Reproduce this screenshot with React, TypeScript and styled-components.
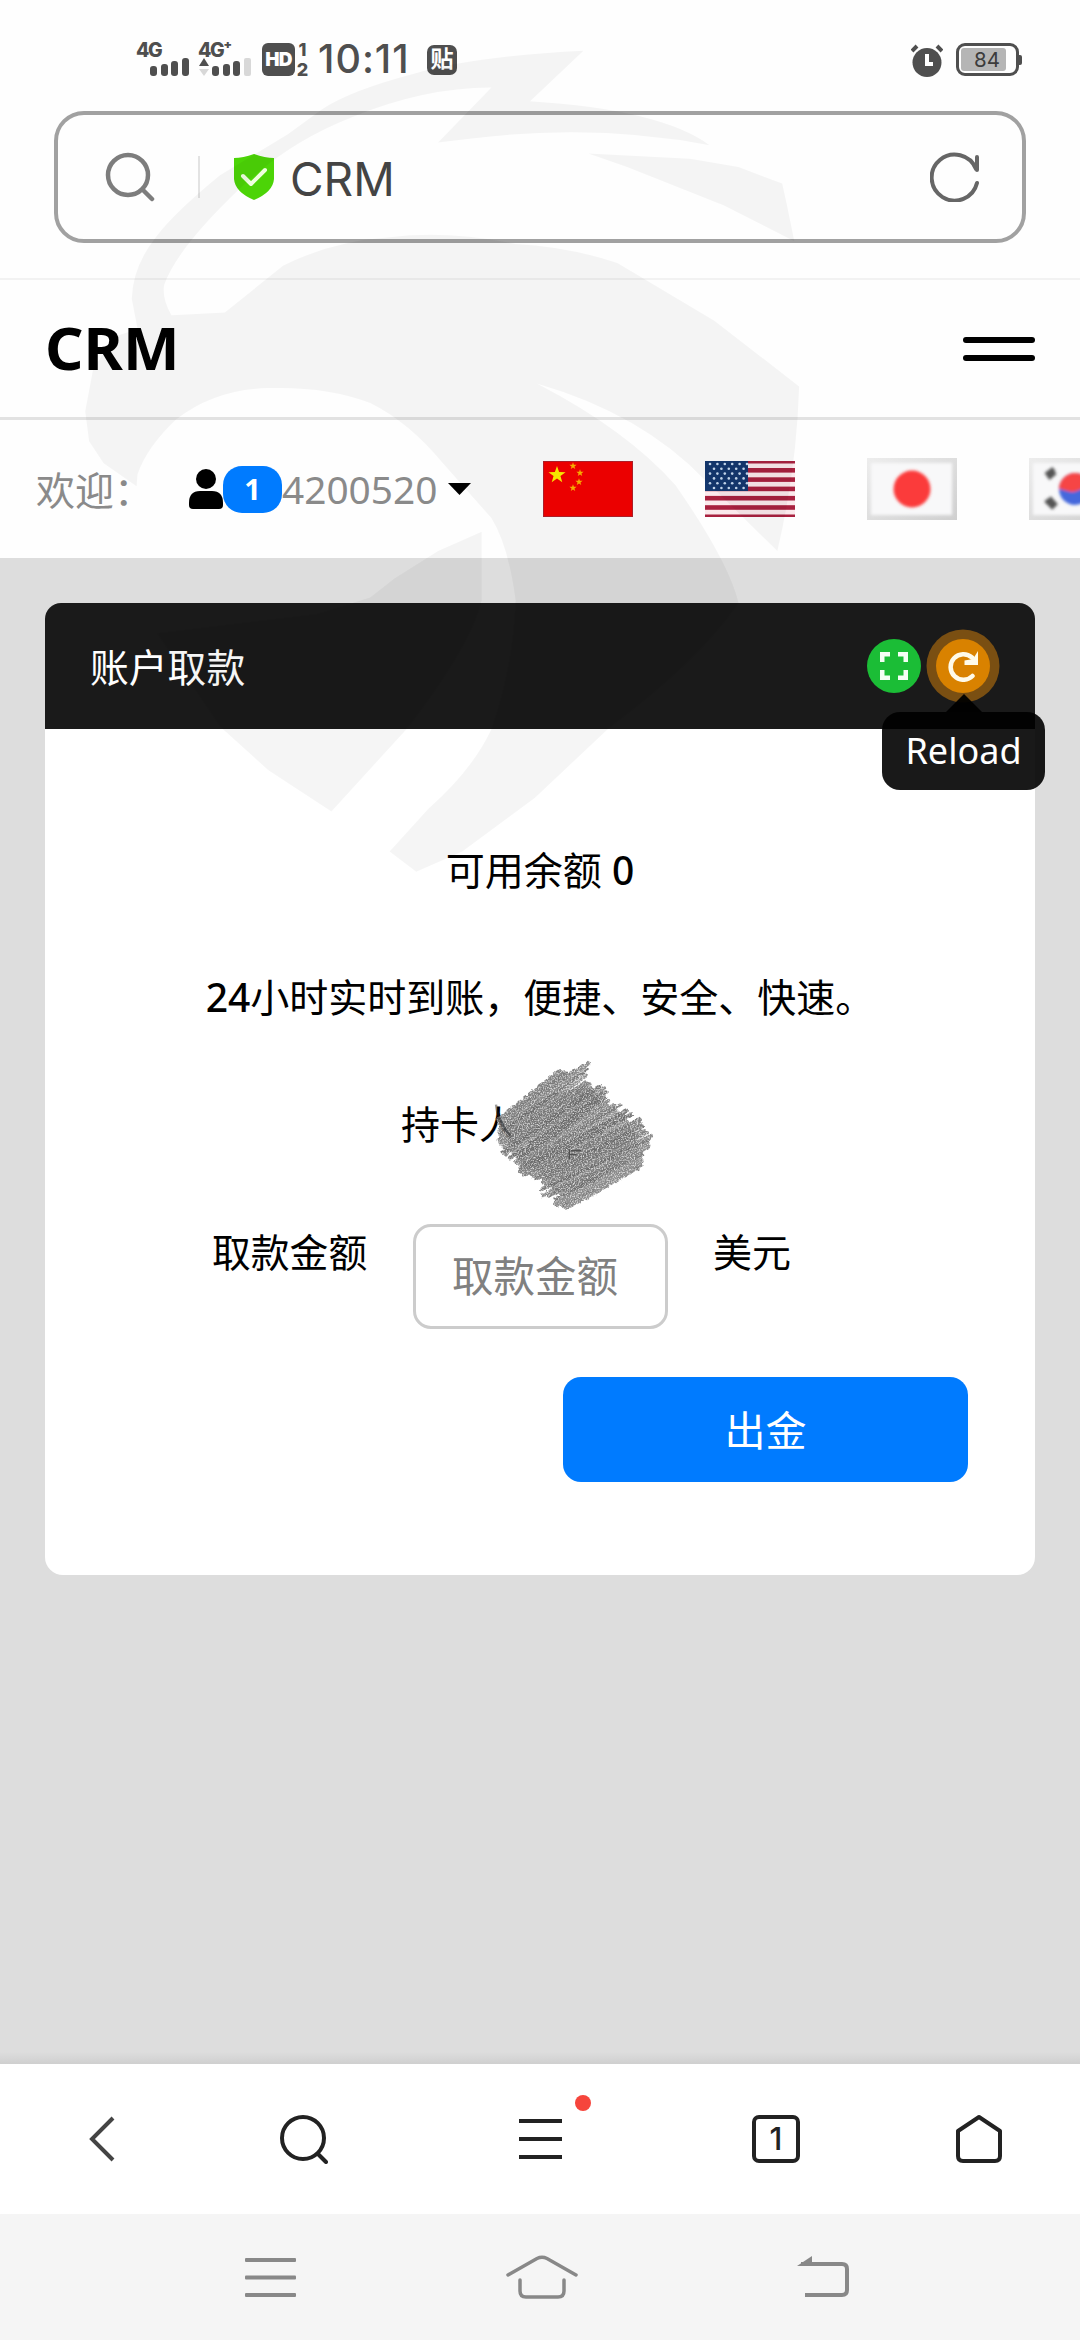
import React from "react";
import styled, { createGlobalStyle } from "styled-components";

const Global = createGlobalStyle`
  * { box-sizing: border-box; }
  body { margin: 0; background: #fff; }
  svg { display: block; flex: none; }
  p, h1, h2 { margin: 0; font-weight: 400; }
`;

const Screen = styled.div`
  position: relative;
  width: 1080px;
  height: 2340px;
  overflow: hidden;
  display: flex;
  flex-direction: column;
  background: #fefefe;
  color: #000;
  font-family: "Noto Sans", "Noto Sans CJK SC", sans-serif;
`;

/* ---------- system status bar ---------- */
const StatusBar = styled.header`
  height: 111px;
  flex: none;
  display: flex;
  align-items: flex-start;
  padding: 43px 58px 0 136px;
  color: #4f4f4f;
  font-family: Inter, "Noto Sans CJK SC", sans-serif;
`;

const Signal = styled.div<{ $width: number }>`
  width: ${(p) => p.$width}px;
  height: 36px;
`;

const NetLabel = styled.div`
  height: 14px;
  font-size: 19.5px;
  line-height: 14px;
  font-weight: 800;
  letter-spacing: -1.5px;
  white-space: nowrap;
`;

const HdBadge = styled.div`
  width: 33px;
  height: 33px;
  border-radius: 6px;
  background: #4f4f4f;
  color: #fff;
  font-size: 19px;
  line-height: 33px;
  font-weight: 900;
  text-align: center;
  letter-spacing: -0.8px;
`;

const SimPair = styled.div`
  width: 15px;
  margin-right: 8px;
  display: flex;
  flex-direction: column;
  align-items: center;
  font-size: 18px;
  line-height: 13px;
  gap: 7px;
  font-weight: 800;
`;

const Clock = styled.time`
  width: 109px;
  height: 33px;
  font-size: 39.5px;
  line-height: 33px;
  font-weight: 500;
  letter-spacing: 1px;
  white-space: nowrap;
`;

const PasteBadge = styled.div`
  width: 30px;
  height: 30px;
  margin-top: 2px;
  border-radius: 7px;
  background: #4f4f4f;
  color: #fff;
  font-size: 23px;
  line-height: 29px;
  font-weight: 700;
  text-align: center;
`;

const StatusRight = styled.div`
  margin-left: auto;
  display: flex;
  align-items: flex-start;
  gap: 13px;
`;

const Battery = styled.div`
  display: flex;
  align-items: center;
`;

const BatteryBody = styled.div`
  width: 63px;
  height: 33px;
  border: 3px solid #4f4f4f;
  border-radius: 9px;
  padding: 2px;
`;

const BatteryFill = styled.div`
  width: 45px;
  height: 23px;
  border-radius: 3px;
  background: #b5b5b5;
  color: #3c3c3c;
  padding-right: 6px;
  font-size: 20.5px;
  line-height: 23px;
  text-align: right;
`;

const BatteryTip = styled.div`
  width: 3px;
  height: 10px;
  border-radius: 0 2px 2px 0;
  background: #4f4f4f;
`;

/* ---------- browser address bar ---------- */
const AddressArea = styled.div`
  height: 169px;
  flex: none;
  padding: 0 54px;
  border-bottom: 2px solid #f2f2f2;
`;

const AddressBox = styled.div`
  height: 132px;
  border: 4px solid #a1a1a1;
  border-radius: 30px;
  display: flex;
  align-items: center;
  padding: 0 42px 0 47px;
`;

const AddressRule = styled.div`
  width: 2px;
  height: 42px;
  margin: 0 34px 0 43px;
  background: #e3e3e3;
`;

const AddressText = styled.div`
  flex: 1;
  margin-left: 16px;
  padding-top: 4px;
  font-family: Inter, sans-serif;
  font-size: 46px;
  line-height: 60px;
  color: #444;
`;

/* ---------- site header ---------- */
const SiteHeader = styled.div`
  height: 140px;
  flex: none;
  display: flex;
  align-items: center;
  justify-content: space-between;
  padding: 0 45px;
  border-bottom: 3px solid #e2e2e2;
`;

const Brand = styled.h1`
  padding-bottom: 3px;
  font-size: 60px;
  line-height: 80px;
  font-weight: 700;
`;

const Burger = styled.div`
  width: 72px;
  display: grid;
  gap: 12px;
`;

const BurgerLine = styled.span`
  height: 6px;
  border-radius: 3px;
  background: #000;
`;

const WelcomeBar = styled.div`
  height: 138px;
  flex: none;
  display: flex;
  align-items: center;
  overflow: hidden;
  padding-left: 36px;
  font-size: 39px;
  color: #8a8a8a;
`;

const Welcome = styled.span`
  width: 153px;
  flex: none;
  padding-bottom: 3px;
  white-space: nowrap;
`;

const CountBadge = styled.span`
  width: 59px;
  height: 47px;
  flex: none;
  border-radius: 19px;
  background: #007bff;
  color: #fff;
  font-size: 29px;
  line-height: 46px;
  font-weight: 700;
  text-align: center;
`;

const Account = styled.span`
  width: 166px;
  flex: none;
  padding-bottom: 1px;
  font-size: 38.8px;
`;

const Flags = styled.div`
  display: flex;
  align-items: center;
  gap: 72px;
  margin-left: 72px;
`;

/* ---------- content ---------- */
const Content = styled.main`
  height: 1506px;
  flex: none;
  padding: 45px;
  background: linear-gradient(to bottom, #ddd 1494px, #cfcfcf 1506px);
`;

const Card = styled.section`
  height: 972px;
  border-radius: 18px;
  background: #fff;
`;

const CardHeader = styled.div`
  height: 126px;
  display: flex;
  align-items: center;
  border-radius: 16px 16px 0 0;
  background: #1a1a1a;
  padding: 0 45px 0 45px;
  color: #fff;
`;

const CardTitle = styled.h2`
  flex: 1;
  padding-bottom: 3px;
  font-size: 38.8px;
`;

const RoundButton = styled.div<{ $color: string; $ring?: string }>`
  position: relative;
  width: 54px;
  height: 54px;
  margin-left: 15px;
  border-radius: 50%;
  display: flex;
  align-items: center;
  justify-content: center;
  background: ${(p) => p.$color};
  box-shadow: ${(p) => (p.$ring ? `0 0 0 9.5px ${p.$ring}` : "none")};
`;

const Tooltip = styled.div`
  position: absolute;
  top: 73px;
  left: -54px;
  width: 163px;
  height: 78px;
  border-radius: 18px;
  background: rgba(0, 0, 0, 0.9);
  color: #fff;
  font-size: 36px;
  line-height: 77px;
  text-align: center;
  &::before {
    content: "";
    position: absolute;
    left: 64px;
    top: -18px;
    border: 18px solid transparent;
    border-top: 0;
    border-bottom-color: rgba(0, 0, 0, 0.95);
  }
`;

const CardBody = styled.div`
  padding-top: 77px;
  font-size: 39px;
`;

const Line = styled.p`
  height: 127px;
  line-height: 127px;
  text-align: center;
  white-space: nowrap;
`;

const Strong = styled.span`
  font-weight: 500;
`;

const HolderLine = styled(Line)`
  position: relative;
  text-align: left;
  padding-left: 356px;
`;

const ScribbleLayer = styled.div`
  position: absolute;
  left: 413px;
  top: -24px;
`;

const AmountRow = styled.div`
  height: 128px;
  display: flex;
  align-items: flex-start;
  padding: 36px 0 0 167px;
  line-height: 58px;
`;

const AmountLabel = styled.label`
  width: 201px;
  flex: none;
  font-size: 38.8px;
`;

const AmountInput = styled.input`
  width: 255px;
  height: 105px;
  margin: 1px 45px 0 0;
  border: 3px solid #ccc;
  border-radius: 18px;
  padding: 0 0 1px 36px;
  background: #fff;
  font-family: inherit;
  font-size: 41.5px;
  &::placeholder { color: #808080; opacity: 1; }
`;

const Submit = styled.button`
  display: block;
  width: 405px;
  height: 105px;
  margin: 62px 0 0 518px;
  padding: 0 0 3px;
  border: 0;
  border-radius: 18px;
  background: #007bff;
  color: #fff;
  font-family: inherit;
  font-size: 41px;
`;

/* ---------- bottom bars ---------- */
const BrowserBar = styled.nav`
  height: 150px;
  flex: none;
  display: grid;
  grid-template-columns: 203px 202px 270px 202px 203px;
  align-items: center;
  justify-items: center;
  background: #fff;
`;

const TabCount = styled.div`
  width: 48px;
  height: 48px;
  border: 4px solid #222;
  border-radius: 7px;
  color: #222;
  font-family: Inter, sans-serif;
  font-size: 31px;
  line-height: 40px;
  font-weight: 500;
  text-align: center;
`;

const MenuSlot = styled.div`
  position: relative;
`;

const RedDot = styled.span`
  position: absolute;
  left: 56px;
  top: -24px;
  width: 16px;
  height: 16px;
  border-radius: 50%;
  background: #f6453c;
`;

const SystemBar = styled.nav`
  height: 126px;
  flex: none;
  display: grid;
  grid-template-columns: 51px 72px 52px;
  column-gap: 214px;
  align-items: center;
  padding-left: 245px;
  column-gap: 0;
  grid-template-columns: 261px 291px 52px;
  background: #f5f5f5;
`;

const WatermarkLayer = styled.div`
  position: absolute;
  left: 0;
  top: 0;
  pointer-events: none;
`;

function SignalBars({ mobile }: { mobile?: boolean }) {
  return mobile ? (
    <svg width="56" height="22" viewBox="0 0 56 22" fill="#4f4f4f">
      <path d="M1 9l5-8 5 8z" />
      <path d="M1 12h10l-5 7z" fill="#d8d8d8" />
      <rect x="14" y="9" width="7" height="10" rx="3" />
      <rect x="25" y="7" width="7" height="12" rx="3" />
      <rect x="35" y="4" width="7" height="15" rx="3" />
      <rect x="46" y="1" width="7" height="18" rx="2" fill="#d8d8d8" />
    </svg>
  ) : (
    <svg width="56" height="22" viewBox="0 0 56 22" fill="#4f4f4f">
      <rect x="14" y="9" width="7" height="10" rx="3" />
      <rect x="25" y="7" width="7" height="12" rx="3" />
      <rect x="35" y="4" width="7" height="15" rx="3" />
      <rect x="46" y="1" width="7" height="18" rx="3" />
    </svg>
  );
}

function star(cx: number, cy: number, r: number) {
  return Array.from({ length: 10 }, (_, i) => {
    const a = -Math.PI / 2 + (i * Math.PI) / 5;
    const q = i % 2 ? r * 0.4 : r;
    return `${cx + q * Math.cos(a)},${cy + q * Math.sin(a)}`;
  }).join(" ");
}

function ChinaFlag() {
  return (
    <svg width="90" height="56" viewBox="0 0 90 56">
      <rect width="90" height="56" fill="#f50000" stroke="#b3202a" strokeWidth="2" />
      <polygon points={star(14, 14, 9)} fill="#ffef00" />
      {[[30, 5], [37, 12], [36, 21], [30, 27]].map(([x, y]) => (
        <polygon key={y} points={star(x, y, 3.8)} fill="#ffb300" />
      ))}
    </svg>
  );
}

function UsaFlag() {
  return (
    <svg width="90" height="56" viewBox="0 0 90 56">
      <rect width="90" height="56" fill="#fbe9ec" />
      {[0, 1, 2, 3, 4, 5, 6].map((i) => (
        <rect key={i} y={i === 0 ? 0 : i * 9.3 - 2.3} width="90" height={i === 0 ? 2.5 : i === 6 ? 2.5 : 4.6} fill="#a8213f" />
      ))}
      <rect width="43" height="30" fill="#14386f" />
      {Array.from({ length: 33 }, (_, i) => {
        const row = Math.floor(i / 5.5);
        const col = i - Math.ceil(row * 5.5);
        return <circle key={i} cx={(row % 2 ? 9 : 5) + col * 7.4} cy={3 + row * 4.8} r="1.3" fill="#c9dcf2" />;
      })}
    </svg>
  );
}

function PaleFlag({ korea }: { korea?: boolean }) {
  const id = korea ? "kr" : "jp";
  return (
    <svg width="90" height="62" viewBox="0 0 90 62">
      <defs>
        <filter id={`soft-${id}`} x="-30%" y="-30%" width="160%" height="160%"><feGaussianBlur stdDeviation="1.8" /></filter>
        <linearGradient id={`edge-${id}`} x1="0" y1="0" x2="1" y2="1">
          <stop offset="0" stopColor="#ededed" />
          <stop offset="1" stopColor="#cfcfcf" />
        </linearGradient>
      </defs>
      <rect width="90" height="62" fill={`url(#edge-${id})`} />
      <rect x="4" y="5" width="81" height="52" fill="#f8f8f9" filter={`url(#soft-${id})`} />
      {korea ? (
        <g filter="url(#soft-kr)">
          <path d="M17 17l8-6M19 20l7-6" stroke="#555" strokeWidth="5" />
          <path d="M17 42l8 8M20 40l7 8" stroke="#555" strokeWidth="5" />
          <circle cx="46" cy="31" r="16" fill="#4468dc" />
          <path d="M30 31a16 16 0 0 1 32 0c-8-4-14 4-20 3s-8-3-12-3z" fill="#f64444" />
        </g>
      ) : (
        <circle cx="45" cy="31" r="18.500" fill="#fb3a3a" filter="url(#soft-jp)" />
      )}
    </svg>
  );
}

/* Pencil strokes that hide the card holder's name */
const edges = [
  [126, 246, 306, 108], [124, 262, 335, 112], [128, 286, 388, 80], [124, 316, 384, 140],
  [140, 326, 400, 160], [142, 358, 440, 155], [172, 374, 440, 186], [190, 386, 488, 210],
  [194, 410, 540, 246], [225, 420, 548, 266], [250, 426, 548, 290], [262, 438, 576, 296],
  [252, 478, 573, 324], [268, 474, 554, 350], [294, 503, 550, 364], [312, 508, 548, 382],
  [335, 512, 510, 408],
];

function strokes() {
  const out: { d: string; w: number; c: string }[] = [];
  let seed = 7;
  const rnd = () => {
    seed = (seed * 16807) % 2147483647;
    return seed / 2147483647;
  };
  for (let i = 0; i < edges.length - 1; i++) {
    for (let k = 0; k < 3; k++) {
      const t = k / 3;
      const v = edges[i].map((n, j) => n + (edges[i + 1][j] - n) * t + (rnd() - 0.5) * 10);
      out.push({
        d: `M${v[0]} ${v[1]}Q${(v[0] + v[2]) / 2} ${(v[1] + v[3]) / 2 + 4} ${v[2]} ${v[3]}`,
        w: 9 + rnd() * 4,
        c: ["#686868", "#737373", "#7e7e7e"][Math.floor(rnd() * 3)],
      });
    }
  }
  return out;
}

function Scribble() {
  return (
    <svg width="220" height="190" viewBox="0 0 660 570">
      <defs>
        <filter id="pencil" x="0" y="0" width="660" height="570" filterUnits="userSpaceOnUse">
          <feTurbulence type="fractalNoise" baseFrequency="0.08" numOctaves="2" seed="4" result="rough" />
          <feDisplacementMap in="SourceGraphic" in2="rough" scale="14" xChannelSelector="R" yChannelSelector="G" result="torn" />
          <feTurbulence type="fractalNoise" baseFrequency="0.25" numOctaves="2" seed="9" />
          <feColorMatrix values="0 0 0 0 1  0 0 0 0 1  0 0 0 0 1  1.8 0 0 0 -0.82" result="dust" />
          <feComposite in="dust" in2="torn" operator="in" result="grain" />
          <feMerge><feMergeNode in="torn" /><feMergeNode in="grain" /></feMerge>
        </filter>
      </defs>
      <path
        d="M150 262L270 176L385 150L440 196L500 240L535 300L540 345L400 440L330 480L290 470L250 410L200 388L150 345Z"
        fill="#7c7c7c"
        filter="url(#pencil)"
        opacity="0.8"
      />
      <g filter="url(#pencil)" opacity="0.88" fill="none" strokeLinecap="round">
        {strokes().map((s, i) => (
          <path key={i} d={s.d} stroke={s.c} strokeWidth={s.w} />
        ))}
      </g>
      <path d="M334 340v30M338 344h32M336 356h20" stroke="#505050" strokeWidth="4" fill="none" />
      <path d="M114 206Q116 250 160 303" stroke="#222" strokeOpacity="0.45" strokeWidth="7" fill="none" />
    </svg>
  );
}

function Watermark() {
  return (
    <svg width="1080" height="900" viewBox="0 0 1080 900">
      <g transform="translate(60 30) scale(.4847 .5484)" fill="#000" fillOpacity="0.038">
        <path d="M1080 38Q850 48 730 80Q600 110 540 145L470 190L330 265Q240 330 200 375Q150 430 148 490L160 545L110 560L68 620L52 695L60 750L90 790L158 832L160 810Q180 760 240 710Q320 655 430 653Q550 650 640 680Q720 715 790 790Q860 860 890 890Q925 940 940 1040Q935 1160 890 1275Q850 1350 760 1420L680 1498L735 1535L830 1498L980 1400L1130 1275Q1320 1150 1400 1045Q1380 970 1270 830Q1170 730 985 645Q1200 700 1330 820L1480 950Q1520 800 1525 650L1350 530L1150 425Q1050 395 940 390Q800 365 680 378Q560 385 460 430L340 515L230 520Q210 490 215 465Q240 400 370 290Q470 205 600 160Q750 105 890 105L780 205L850 198Q1100 170 1340 210Q1240 145 970 130Z" />
        <path d="M870 915L780 950L690 1000L640 1035L530 1065L200 1100L330 1270L430 1350L560 1425L720 1270Q850 1120 870 1040Z" />
        <path d="M1090 225L1300 235L1400 250L1490 280L1500 320L1515 385L1370 320L1170 250Z" />
      </g>
    </svg>
  );
}

export default function App() {
  return (
    <Screen>
      <Global />
      <StatusBar>
        <Signal $width={62}>
          <NetLabel>4G</NetLabel>
          <SignalBars />
        </Signal>
        <Signal $width={64}>
          <NetLabel>4G⁺</NetLabel>
          <SignalBars mobile />
        </Signal>
        <HdBadge>HD</HdBadge>
        <SimPair><span>1</span><span>2</span></SimPair>
        <Clock>10:11</Clock>
        <PasteBadge>贴</PasteBadge>
        <StatusRight>
          <svg width="32" height="36" viewBox="0 0 32 36">
            <circle cx="16" cy="19.500" r="14.500" fill="#4f4f4f" />
            <path d="M1 8l5-5M31 8l-5-5" stroke="#4f4f4f" strokeWidth="4" />
            <path d="M16 11v10h6" fill="none" stroke="#fff" strokeWidth="4" />
          </svg>
          <Battery>
            <BatteryBody><BatteryFill>84</BatteryFill></BatteryBody>
            <BatteryTip />
          </Battery>
        </StatusRight>
      </StatusBar>

      <AddressArea>
        <AddressBox>
          <svg width="50" height="50" viewBox="0 0 50 50" fill="none" stroke="#7d7d7d" strokeWidth="4.500" strokeLinecap="round">
            <circle cx="23" cy="23" r="20" />
            <path d="M37.500 37.500L47 47" />
          </svg>
          <AddressRule />
          <svg width="40" height="46" viewBox="0 0 40 46">
            <path d="M20 0Q31 4 40 4V25Q39 38 20 46Q1 38 0 25V4Q9 4 20 0Z" fill="#4cd407" />
            <path d="M9 22l8 8 14-14" fill="none" stroke="#efffdf" strokeWidth="4" strokeLinecap="round" strokeLinejoin="round" />
          </svg>
          <AddressText>CRM</AddressText>
          <svg width="50" height="50" viewBox="0 0 50 50" fill="none" stroke="#666" strokeWidth="4" strokeLinecap="round">
            <path d="M47 31A23 23 0 1 1 46 17M47 5V18" />
          </svg>
        </AddressBox>
      </AddressArea>

      <SiteHeader>
        <Brand>CRM</Brand>
        <Burger><BurgerLine /><BurgerLine /></Burger>
      </SiteHeader>

      <WelcomeBar>
        <Welcome>欢迎：</Welcome>
        <svg width="34" height="40" viewBox="0 0 34 40">
          <circle cx="17" cy="10" r="10" />
          <path d="M11 22h12q11 0 11 12v2q0 4-4 4H4q-4 0-4-4v-2q0-12 11-12z" />
        </svg>
        <CountBadge>1</CountBadge>
        <Account>4200520</Account>
        <svg width="23" height="12" viewBox="0 0 23 12"><path d="M0 0h23L11.500 12z" /></svg>
        <Flags>
          <ChinaFlag />
          <UsaFlag />
          <PaleFlag />
          <PaleFlag korea />
        </Flags>
      </WelcomeBar>

      <Content>
        <Card>
          <CardHeader>
            <CardTitle>账户取款</CardTitle>
            <RoundButton $color="#1bbd36">
              <svg width="28" height="28" viewBox="0 0 28 28" fill="none" stroke="#f4fff4" strokeWidth="4.500">
                <path d="M2.250 10V2.250H10M18 2.250h7.750V10M25.750 18v7.750H18M10 25.750H2.250V18" />
              </svg>
            </RoundButton>
            <RoundButton $color="#d98200" $ring="#7a4f12">
              <svg width="32" height="32" viewBox="0 0 32 32" fill="none" stroke="#fffbea" strokeWidth="4.500">
                <path d="M25.500 26A12.800 12.800 0 1 1 25 7.500" strokeLinecap="round" />
                <path d="M31 1v14H17.500v-4.500L26 9z" fill="#fffbea" stroke="none" />
              </svg>
              <Tooltip>Reload</Tooltip>
            </RoundButton>
          </CardHeader>
          <CardBody>
            <Line>可用余额 <Strong>0</Strong></Line>
            <Line><Strong>24</Strong>小时实时到账，便捷、安全、快速。</Line>
            <HolderLine>
              持卡人
              <ScribbleLayer><Scribble /></ScribbleLayer>
            </HolderLine>
            <AmountRow>
              <AmountLabel>取款金额</AmountLabel>
              <AmountInput placeholder="取款金额" />
              <span>美元</span>
            </AmountRow>
            <Submit>出金</Submit>
          </CardBody>
        </Card>
      </Content>

      <BrowserBar>
        <svg width="26" height="46" viewBox="0 0 26 46" fill="none" stroke="#444" strokeWidth="4"><path d="M24 2L3 23l21 21" /></svg>
        <svg width="48" height="50" viewBox="0 0 48 50" fill="none" stroke="#222" strokeWidth="4" strokeLinecap="round">
          <circle cx="23" cy="24" r="21" />
          <path d="M38 40l8 8" />
        </svg>
        <MenuSlot>
          <svg width="43" height="40" viewBox="0 0 43 40" fill="#222">
            <rect width="43" height="4" /><rect y="18" width="43" height="4" /><rect y="36" width="43" height="4" />
          </svg>
          <RedDot />
        </MenuSlot>
        <TabCount>1</TabCount>
        <svg width="48" height="50" viewBox="0 0 48 50" fill="none" stroke="#222" strokeWidth="4">
          <path d="M24 3L45 17V42q0 5-5 5H8q-5 0-5-5V17z" strokeLinejoin="round" />
        </svg>
      </BrowserBar>

      <SystemBar>
        <svg width="51" height="39" viewBox="0 0 51 39" fill="#888">
          <rect width="51" height="4" rx="1" /><rect y="17.500" width="51" height="4" rx="1" /><rect y="35" width="51" height="4" rx="1" />
        </svg>
        <svg width="72" height="44" viewBox="0 0 72 44" fill="none" stroke="#888" strokeWidth="3.500" strokeLinecap="round">
          <path d="M2 20L31 3.500q5-2.500 10 0L70 20" />
          <path d="M14 25v11q0 6 6 6h32q6 0 6-6V25" />
        </svg>
        <svg width="52" height="42" viewBox="0 0 52 42" fill="none" stroke="#888" strokeWidth="4">
          <path d="M4 8h41q5 0 5 5v21q0 5-5 5H8" />
          <path d="M0 10L15 0v10z" fill="#888" stroke="none" />
        </svg>
      </SystemBar>

      <WatermarkLayer><Watermark /></WatermarkLayer>
    </Screen>
  );
}
